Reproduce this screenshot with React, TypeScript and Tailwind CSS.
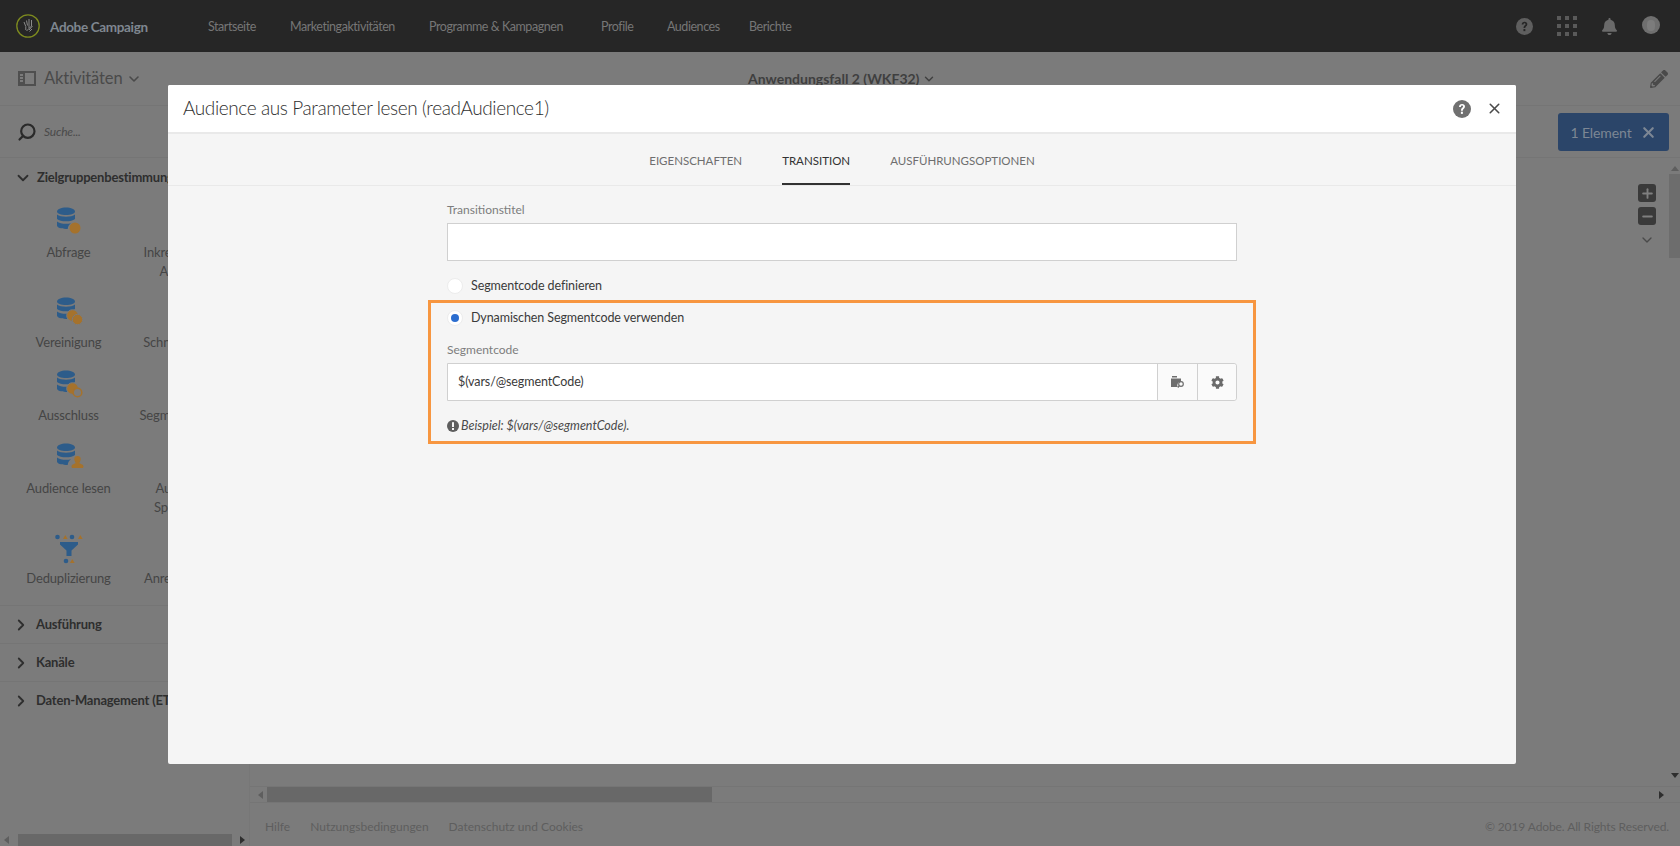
import { ChevronDown, ChevronRight, Plus, Minus, X, Search } from 'lucide-react'
import { FaCog, FaBell, FaPencilAlt } from 'react-icons/fa'

const navItems = [
  { label: 'Startseite', width: 'w-[82px]' },
  { label: 'Marketingaktivitäten', width: 'w-[139px]' },
  { label: 'Programme & Kampagnen', width: 'w-[172px]' },
  { label: 'Profile', width: 'w-[66px]' },
  { label: 'Audiences', width: 'w-[82px]' },
  { label: 'Berichte', width: 'w-[60px]' },
]

type Badge = 'dot' | 'union' | 'exclude' | 'person'

function DbIcon({ badge }: { badge: Badge }) {
  return (
    <svg width="32" height="32" viewBox="0 0 32 32">
      <path d="M4 5.500C4 3.500 8 1.500 13 1.500s9 2 9 4S18 9 13 9 4 7.500 4 5.500Z" fill="#2d5c8a" />
      <path d="M4 8.500C6 10 9 10.700 13 10.700S20 10 22 8.500V13c-2 1.500-5 2.300-9 2.300S6 14.500 4 13Z" fill="#2d5c8a" />
      <path d="M4 15.500c2 1.500 5 2.300 9 2.300 2 0 3.500-.2 5-.6-1.800 1.300-3 3-3.300 5.700H13c-5 0-9-1.500-9-3.400Z" fill="#2d5c8a" />
      {badge === 'dot' && <circle cx="22" cy="22" r="5.500" fill="#a5722c" />}
      {badge === 'union' && (
        <>
          <circle cx="19.500" cy="19.500" r="5.800" fill="#a5722c" stroke="#7b7b7b" strokeWidth="1" />
          <circle cx="24.500" cy="23.500" r="5.200" fill="#a5722c" stroke="#7b7b7b" strokeWidth="1" />
        </>
      )}
      {badge === 'exclude' && (
        <>
          <circle cx="19.500" cy="19.500" r="5.800" fill="#a5722c" stroke="#7b7b7b" strokeWidth="1" />
          <circle cx="24.500" cy="23.500" r="4.300" fill="#7b7b7b" stroke="#a5722c" strokeWidth="1.500" />
        </>
      )}
      {badge === 'person' && (
        <path d="M24.500 14a3.200 3.200 0 0 1 3.200 3.200c0 1.600-1 2.600-1.300 3.800 0 1 4.100.9 4.100 3.500 0 1-.6 1.500-1.600 1.500h-8.800c-1 0-1.600-.5-1.600-1.500 0-2.600 4.100-2.500 4.100-3.500-.3-1.200-1.300-2.200-1.300-3.800a3.200 3.200 0 0 1 3.200-3.200Z" fill="#a5722c" />
      )}
    </svg>
  )
}

function FunnelIcon() {
  return (
    <svg width="32" height="32" viewBox="0 0 32 32">
      <circle cx="4.500" cy="5" r="2.300" fill="#2d5c8a" />
      <path d="M10 7l2.300-4 2.300 4Z" fill="#a5722c" />
      <circle cx="19" cy="5" r="2.300" fill="#2d5c8a" />
      <path d="M25 7l2.300-4 2.300 4Z" fill="#a5722c" />
      <path d="M7 10h18v2.500l-6.500 6V24h-5v-5.500L7 12.500Z" fill="#2d5c8a" />
      <circle cx="13" cy="29" r="2.300" fill="#2d5c8a" />
      <path d="M17 31l2.300-4 2.300 4Z" fill="#a5722c" />
    </svg>
  )
}

const activities = [
  { label: 'Abfrage', icon: <DbIcon badge="dot" />, right: 'Inkrementelle Abfrage', tall: true },
  { label: 'Vereinigung', icon: <DbIcon badge="union" />, right: 'Schnittmenge', tall: false },
  { label: 'Ausschluss', icon: <DbIcon badge="exclude" />, right: 'Segmentierung', tall: false },
  { label: 'Audience lesen', icon: <DbIcon badge="person" />, right: 'Audience Speichern', tall: true },
  { label: 'Deduplizierung', icon: <FunnelIcon />, right: 'Anreicherung', tall: false },
]

function Sidebar() {
  return (
    <aside className="w-[250px] shrink-0 flex flex-col border-r border-[#777777]">
      <div className="h-[52px] shrink-0 flex items-center gap-[7px] pl-[17px] border-b border-[#757575]">
        <Search size={20} strokeWidth={2.600} className="text-[#2a2a2a] -scale-x-100" />
        <span className="text-[12px] italic tracking-[-0.2px] text-[#4a4a4a]">Suche...</span>
      </div>
      <div className="flex-1 flex flex-col overflow-hidden">
        <div className="h-[40px] shrink-0 flex items-center gap-[5px] pl-[14px] text-[13px] font-bold tracking-[-0.2px] text-[#2e2e2e] whitespace-nowrap">
          <ChevronDown size={18} strokeWidth={2.400} />
          Zielgruppenbestimmung
        </div>
        <div className="pl-[8px] grid grid-cols-[121px_105px] pt-[8px]">
          {activities.map((a) => (
            <div key={a.label} className="contents">
              <div className={`flex flex-col items-center ${a.tall ? 'h-[90px]' : 'h-[73px]'}`}>
                {a.icon}
                <span className="mt-[5px] text-[13px] tracking-[-0.15px] leading-[19px] text-[#454545] text-center">{a.label}</span>
              </div>
              <div className={`flex flex-col items-center ${a.tall ? 'h-[90px]' : 'h-[73px]'}`}>
                <div className="h-[32px]" />
                <span className="mt-[5px] text-[13px] tracking-[-0.15px] leading-[19px] text-[#454545] text-center">{a.right}</span>
              </div>
            </div>
          ))}
        </div>
        <div>
          {['Ausführung', 'Kanäle', 'Daten-Management (ETL)'].map((s) => (
            <div
              key={s}
              className="h-[38px] shrink-0 flex items-center gap-[6px] pl-[12px] text-[13px] font-bold tracking-[-0.2px] text-[#2e2e2e] whitespace-nowrap border-t border-[#757575]"
            >
              <ChevronRight size={18} strokeWidth={2.400} />
              {s}
            </div>
          ))}
        </div>
      </div>
      <div className="h-[12px] shrink-0 flex items-center justify-between px-[4px]">
        <span className="w-0 h-0 border-y-[4px] border-y-transparent border-r-[5px] border-r-[#5e5e5e]" />
        <div className="w-[214px] h-full bg-[#686868]" />
        <span className="w-0 h-0 border-y-[4px] border-y-transparent border-l-[5px] border-l-[#2e2e2e]" />
      </div>
    </aside>
  )
}

function HelpCircle({ size, bg, fg }: { size: number; bg: string; fg: string }) {
  return (
    <svg width={size} height={size} viewBox="0 0 18 18">
      <circle cx="9" cy="9" r="9" fill={bg} />
      <path d="M6 7c0-1.800 1.300-3 3.100-3C10.900 4 12 5.100 12 6.600c0 2.300-2.200 2.300-2.200 4.100H8c0-2.900 2.100-2.800 2.100-4.100 0-.6-.4-1-1-1-.7 0-1.200.5-1.200 1.400Z" fill={fg} />
      <rect x="7.900" y="11.700" width="2" height="2.200" fill={fg} />
    </svg>
  )
}

function Dialog() {
  return (
    <div className="absolute left-[168px] top-[85px] w-[1348px] h-[679px] bg-[#f5f5f5] rounded-[2px] flex flex-col overflow-hidden">
      <div className="h-[49px] shrink-0 bg-white border-b-2 border-[#e9e9e9] flex items-center pl-[15px] pr-[13px]">
        <h1 className="flex-1 text-[19px] tracking-[-0.4px] font-light text-[#2f2f2f]">Audience aus Parameter lesen (readAudience1)</h1>
        <HelpCircle size={18} bg="#707070" fg="#ffffff" />
        <X size={17} strokeWidth={2.200} className="ml-[15px] text-[#4b4b4b]" />
      </div>
      <div className="h-[52px] shrink-0 border-b border-[#e9e9e9] flex justify-center gap-[40px] text-[11.500px] uppercase text-[#6e6e6e]">
        <div className="flex items-center pt-[2px]">Eigenschaften</div>
        <div className="flex items-center border-b-2 border-[#323232] text-[#323232] pt-[4px]">Transition</div>
        <div className="flex items-center pt-[2px]">Ausführungsoptionen</div>
      </div>
      <div className="w-[828px] mx-auto pt-[14px]">
        <div className="px-[19px]">
          <label className="block text-[12px] leading-[19px] text-[#7d7d7d] mb-[4px]">Transitionstitel</label>
          <div className="h-[38px] bg-white border border-[#d0d0d0]" />
          <div className="h-[16px] mt-[17px] flex items-center gap-[8px] text-[12.500px] tracking-[-0.1px] text-[#3a3a3a]">
            <span className="w-[16px] h-[16px] rounded-full bg-white border border-[#ececec]" />
            Segmentcode definieren
          </div>
        </div>
        <div className="mt-[6px] h-[144px] border-[3px] border-[#f79640] px-[16px] pt-[7px]">
          <div className="h-[16px] flex items-center gap-[8px] text-[12.500px] tracking-[-0.1px] text-[#3a3a3a]">
            <span className="w-[16px] h-[16px] rounded-full bg-white border border-[#ececec] flex items-center justify-center">
              <span className="w-[8px] h-[8px] rounded-full bg-[#2b6dcf]" />
            </span>
            Dynamischen Segmentcode verwenden
          </div>
          <label className="block mt-[14px] text-[12px] leading-[19px] text-[#7d7d7d] mb-[4px]">Segmentcode</label>
          <div className="h-[38px] flex bg-white border border-[#d0d0d0] rounded-r-[3px]">
            <div className="flex-1 flex items-center pl-[10px] text-[12.500px] tracking-[-0.1px] text-[#3a3a3a]">$(vars/@segmentCode)</div>
            <div className="w-[40px] flex items-center justify-center bg-[#fafafa] border-l border-[#d0d0d0]">
              <svg width="14" height="12" viewBox="0 0 14 12">
                <path d="M1 0h5v1.500H1ZM0 2.500h10v3.300a3.500 3.500 0 0 0-3.300 5.200H0Z" fill="#6e6e6e" />
                <circle cx="10" cy="8" r="2.300" fill="none" stroke="#6e6e6e" strokeWidth="1.200" />
                <path d="M8.300 9.800 6.800 11.500" stroke="#6e6e6e" strokeWidth="1.300" />
              </svg>
            </div>
            <div className="w-[39px] flex items-center justify-center bg-[#fafafa] border-l border-[#d0d0d0] rounded-r-[3px]">
              <FaCog size={13} className="text-[#6a6a6a]" />
            </div>
          </div>
          <div className="mt-[17px] flex items-center gap-[2px] text-[12.500px] leading-[16px] italic text-[#4a4a4a]">
            <svg width="12" height="12" viewBox="0 0 12 12">
              <circle cx="6" cy="6" r="6" fill="#5e5e5e" />
              <rect x="5" y="2.200" width="2" height="4.800" fill="#f5f5f5" />
              <rect x="5" y="8" width="2" height="2" fill="#f5f5f5" />
            </svg>
            Beispiel: $(vars/@segmentCode).
          </div>
        </div>
      </div>
    </div>
  )
}

export default function App() {
  return (
    <div className="relative w-full h-screen overflow-hidden flex flex-col bg-[#7b7b7b] font-['Lato','Noto_Sans',sans-serif]">
      <header className="h-[52px] shrink-0 bg-[#262626] flex items-center">
        <div className="w-[208px] flex items-center pl-[16px] gap-[10px]">
          <svg width="24" height="24" viewBox="0 0 24 24">
            <circle cx="12" cy="12" r="11.200" fill="none" stroke="#7d8a1f" strokeWidth="1.300" />
            <path d="M8 8l1.800 4.500v3.500M10.500 6.500l1 5M13 5v9M15.500 6v6l-5 5M16.500 12l-3.500 4M16 15l-2.500 2.500" fill="none" stroke="#8a8a8a" strokeWidth="1" />
          </svg>
          <span className="text-[13.500px] font-bold tracking-[-0.35px] text-[#7f8790] whitespace-nowrap pt-[2px]">Adobe Campaign</span>
        </div>
        <nav className="flex text-[12.500px] tracking-[-0.45px] text-[#767676] whitespace-nowrap pt-[3px]">
          {navItems.map((n) => (
            <span key={n.label} className={n.width}>{n.label}</span>
          ))}
        </nav>
        <div className="ml-auto flex items-center gap-[24px] pr-[20px]">
          <HelpCircle size={17} bg="#5f5f5f" fg="#262626" />
          <div className="grid grid-cols-3 gap-[4px]">
            {Array.from({ length: 9 }).map((_, i) => (
              <span key={i} className="w-[4px] h-[4px] bg-[#5a5a5a]" />
            ))}
          </div>
          <FaBell size={17} className="text-[#6a6a6a]" />
          <div className="w-[18px] h-[18px] rounded-full bg-[#6f6f6f] flex items-center justify-center -translate-y-[1px]">
            <span className="w-[8px] h-[11px] rounded-full bg-[#7c7c7c]" />
          </div>
        </div>
      </header>

      <div className="h-[54px] shrink-0 flex items-center border-b border-[#757575] pl-[18px] pr-[12px]">
        <div className="w-[250px] flex items-center gap-[8px] text-[16.500px] tracking-[-0.1px] text-[#4a4a4a]">
          <svg width="18" height="15" viewBox="0 0 18 15">
            <path d="M0 0h18v15H0ZM7 2v11h9V2ZM2 3v2h3V3Zm0 3v2h3V6Zm0 3v2h3V9Z" fill="#4f4f4f" fillRule="evenodd" />
          </svg>
          Aktivitäten
          <ChevronDown size={16} strokeWidth={2.400} className="-ml-[5px]" />
        </div>
        <div className="ml-auto flex items-center">
          <FaPencilAlt size={18} className="text-[#4a4a4a]" />
        </div>
      </div>

      <div className="flex-1 flex min-h-0">
        <Sidebar />
        <main className="flex-1 flex flex-col min-w-0">
          <div className="h-[52px] shrink-0 border-b border-[#757575] flex items-center justify-end pr-[11px] pt-[1px]">
            <div className="w-[111px] h-[38px] rounded-[3px] bg-[#2b4569] flex items-center justify-center gap-[8px] text-[14px] tracking-[-0.1px] text-[#7d8794]">
              1 Element
              <X size={17} strokeWidth={3} />
            </div>
          </div>
          <div className="relative flex-1 flex justify-end min-h-0">
            <div className="absolute right-[24px] top-[26px] flex flex-col items-center gap-[5px]">
              <div className="w-[18px] h-[18px] rounded-[3px] bg-[#3a3a3a] flex items-center justify-center">
                <Plus size={15} strokeWidth={3} className="text-[#7f7f7f]" />
              </div>
              <div className="w-[18px] h-[18px] rounded-[3px] bg-[#3a3a3a] flex items-center justify-center">
                <Minus size={15} strokeWidth={3} className="text-[#7f7f7f]" />
              </div>
              <ChevronDown size={16} className="mt-[2px] text-[#4a4a4a]" />
            </div>
            <div className="w-[11px] flex flex-col items-center">
              <span className="mt-[8px] w-0 h-0 border-x-[4px] border-x-transparent border-b-[5px] border-b-[#5e5e5e]" />
              <div className="mt-[3px] w-full h-[84px] bg-[#6d6d6d]" />
              <span className="mt-auto mb-[8px] w-0 h-0 border-x-[4px] border-x-transparent border-t-[5px] border-t-[#2e2e2e]" />
            </div>
          </div>
          <div className="h-[17px] shrink-0 flex items-center pl-[8px] pr-[16px] border-y border-[#757575]">
            <span className="w-0 h-0 border-y-[4px] border-y-transparent border-r-[5px] border-r-[#5e5e5e]" />
            <div className="ml-[4px] w-[445px] h-full bg-[#686868]" />
            <span className="ml-auto w-0 h-0 border-y-[4px] border-y-transparent border-l-[5px] border-l-[#2e2e2e]" />
          </div>
          <footer className="h-[43px] shrink-0 flex items-center pl-[15px] pr-[11px] pt-[5px] gap-[20px] text-[12px] text-[#5e5e5e]">
            <span>Hilfe</span>
            <span>Nutzungsbedingungen</span>
            <span>Datenschutz und Cookies</span>
            <span className="ml-auto tracking-[-0.1px]">© 2019 Adobe. All Rights Reserved.</span>
          </footer>
        </main>
      </div>

      <div className="absolute left-[748px] top-[68px] flex items-center gap-[3px] text-[14px] font-bold text-[#3f3f3f]">
        Anwendungsfall 2 (WKF32)
        <ChevronDown size={14} strokeWidth={2.400} />
      </div>

      <Dialog />
    </div>
  )
}
